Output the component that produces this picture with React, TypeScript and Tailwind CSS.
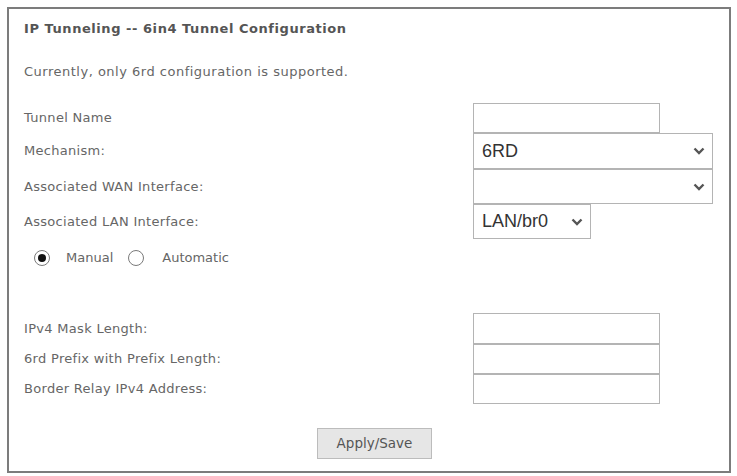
import React from 'react';

const labelFont = { fontFamily: '"DejaVu Sans", Verdana, sans-serif' };
const fieldFont = { fontFamily: '"Liberation Sans", Arial, sans-serif' };

const Chevron: React.FC = () => (
  <svg width="12" height="8" viewBox="0 0 12 8" className="shrink-0">
    <polyline points="1.5,1.5 6,6 10.5,1.5" fill="none" stroke="#555" strokeWidth="2.4" />
  </svg>
);

const TextBox: React.FC = () => (
  <div className="w-[187px] h-full border border-[#b4b4b4] bg-white" />
);

const SelectBox: React.FC<{ value?: string; width: string }> = ({ value, width }) => (
  <div
    className={`${width} h-full border border-[#b4b4b4] bg-white flex items-center justify-between pl-[8px] pr-[7px] text-[18px] text-[#333]`}
    style={fieldFont}
  >
    <span>{value}</span>
    <Chevron />
  </div>
);

const Row: React.FC<{ label: string; h: string; children: React.ReactNode }> = ({ label, h, children }) => (
  <div className={`flex items-center ${h}`}>
    <div className="w-[464px] pl-[15px] text-[13px] tracking-[0.3px] text-[#666]">{label}</div>
    <div className="h-full flex">{children}</div>
  </div>
);

const Radio: React.FC<{ checked?: boolean }> = ({ checked }) => (
  <span className="w-[16px] h-[16px] rounded-full border-[1.5px] border-[#7a7a7a] bg-white flex items-center justify-center">
    {checked && <span className="w-[8px] h-[8px] rounded-full bg-[#111]" />}
  </span>
);

export default function App() {
  return (
    <div className="w-[737px] h-[476px] bg-white pt-[7px] pl-[7px]" style={labelFont}>
      <div className="w-[724px] h-[466px] border-2 border-[#7c7c7c] flex flex-col">
        <div className="h-[40px] flex items-center pl-[15px] text-[13px] font-bold tracking-[0.55px] text-[#555]">
          IP Tunneling -- 6in4 Tunnel Configuration
        </div>
        <div className="h-[46px] flex items-center pl-[15px] text-[13px] tracking-[0.5px] text-[#666]">
          Currently, only 6rd configuration is supported.
        </div>

        <div className="mt-[8px]">
          <Row label="Tunnel Name" h="h-[30px]">
            <TextBox />
          </Row>
          <Row label="Mechanism:" h="h-[36px]">
            <SelectBox value="6RD" width="w-[240px]" />
          </Row>
          <Row label="Associated WAN Interface:" h="h-[35px]">
            <SelectBox width="w-[240px]" />
          </Row>
          <Row label="Associated LAN Interface:" h="h-[35px]">
            <SelectBox value="LAN/br0" width="w-[118px]" />
          </Row>
        </div>

        <div className="h-[38px] flex items-center pl-[25px] text-[13px] text-[#666]">
          <Radio checked />
          <span className="ml-[16px]">Manual</span>
          <span className="ml-[15px]">
            <Radio />
          </span>
          <span className="ml-[18px]">Automatic</span>
        </div>

        <div className="mt-[36px]">
          <Row label="IPv4 Mask Length:" h="h-[31px]">
            <TextBox />
          </Row>
          <Row label="6rd Prefix with Prefix Length:" h="h-[30px]">
            <TextBox />
          </Row>
          <Row label="Border Relay IPv4 Address:" h="h-[30px]">
            <TextBox />
          </Row>
        </div>

        <div className="mt-[24px] flex justify-center pl-[11px]">
          <button className="w-[115px] h-[31px] bg-[#e6e6e6] border border-[#bcbcbc] text-[13.5px] text-[#555]">
            Apply/Save
          </button>
        </div>
      </div>
    </div>
  );
}
